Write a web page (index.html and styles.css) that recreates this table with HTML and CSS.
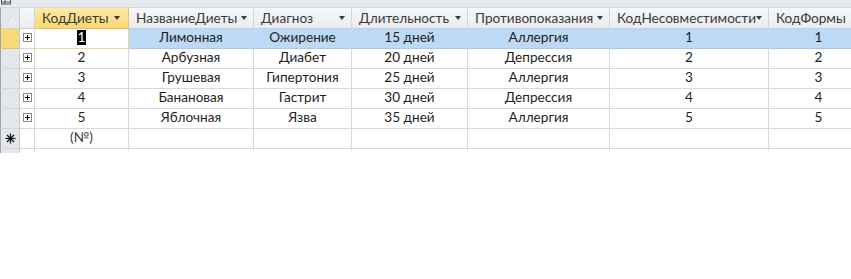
FILE: index.html
```html
<!DOCTYPE html>
<html lang="ru">
<head>
<meta charset="utf-8">
<title>Диеты</title>
<link rel="stylesheet" href="styles.css">
</head>
<body>
<div class="topstrip">
  <svg class="tabicon" width="10" height="6" viewBox="0 0 10 6"><rect x="0.5" y="-3" width="9" height="7" fill="#f4f4f4" stroke="#555"/><line x1="0" y1="2" x2="10" y2="2" stroke="#555"/><line x1="4" y1="-2" x2="4" y2="4" stroke="#555"/></svg>
</div>
<table class="sheet">
  <colgroup>
    <col class="c-sel"><col class="c-exp"><col class="c1"><col class="c2"><col class="c3"><col class="c4"><col class="c5"><col class="c6"><col class="c7">
  </colgroup>
  <thead>
    <tr>
      <th class="selall"><svg width="20" height="20" viewBox="0 0 20 20"><path d="M12 5 L6 15" stroke="#d8dce2" stroke-width="1"/><path d="M13 6 L8 15 L13 15 Z" fill="#eceef1"/></svg></th>
      <th class="hexp"></th>
      <th class="hd active"><span class="ht">КодДиеты</span><span class="arr"></span></th>
      <th class="hd"><span class="ht">НазваниеДиеты</span><span class="arr"></span></th>
      <th class="hd"><span class="ht">Диагноз</span><span class="arr"></span></th>
      <th class="hd"><span class="ht">Длительность</span><span class="arr"></span></th>
      <th class="hd"><span class="ht">Противопоказания</span><span class="arr"></span></th>
      <th class="hd"><span class="ht">КодНесовместимости</span><span class="arr"></span></th>
      <th class="hd"><span class="ht">КодФормы</span><span class="arr"></span></th>
    </tr>
  </thead>
  <tbody>
    <tr class="cur">
      <td class="sel cursel"></td>
      <td class="exp"><span class="plus"></span></td>
      <td class="curcell"><span class="hl">1</span></td>
      <td>Лимонная</td><td>Ожирение</td><td>15 дней</td><td>Аллергия</td><td>1</td><td>1</td>
    </tr>
    <tr>
      <td class="sel"></td>
      <td class="exp"><span class="plus"></span></td>
      <td>2</td><td>Арбузная</td><td>Диабет</td><td>20 дней</td><td>Депрессия</td><td>2</td><td>2</td>
    </tr>
    <tr>
      <td class="sel"></td>
      <td class="exp"><span class="plus"></span></td>
      <td>3</td><td>Грушевая</td><td>Гипертония</td><td>25 дней</td><td>Аллергия</td><td>3</td><td>3</td>
    </tr>
    <tr>
      <td class="sel"></td>
      <td class="exp"><span class="plus"></span></td>
      <td>4</td><td>Банановая</td><td>Гастрит</td><td>30 дней</td><td>Депрессия</td><td>4</td><td>4</td>
    </tr>
    <tr>
      <td class="sel"></td>
      <td class="exp"><span class="plus"></span></td>
      <td>5</td><td>Яблочная</td><td>Язва</td><td>35 дней</td><td>Аллергия</td><td>5</td><td>5</td>
    </tr>
    <tr class="newrow">
      <td class="sel"><svg width="11" height="11" viewBox="0 0 11 11"><g stroke="#111" stroke-width="1.2"><line x1="5.5" y1="0.5" x2="5.5" y2="10.5"/><line x1="0.5" y1="5.5" x2="10.5" y2="5.5"/><line x1="2" y1="2" x2="9" y2="9"/><line x1="9" y1="2" x2="2" y2="9"/></g></svg></td>
      <td class="exp"></td>
      <td class="auto">(№)</td>
      <td></td><td></td><td></td><td></td><td></td><td></td>
    </tr>
    <tr class="tail">
      <td class="sel"></td><td class="exp"></td><td></td><td></td><td></td><td></td><td></td><td></td><td></td>
    </tr>
  </tbody>
</table>
</body>
</html>
```

FILE: styles.css
```css
html, body {
  margin: 0;
  padding: 0;
  background: #ffffff;
  overflow: hidden;
}
body {
  width: 851px;
  height: 279px;
  font-family: Lato, "Open Sans", "Liberation Sans", sans-serif;
  font-size: 13.6px;
  color: #1e1e1e;
}
.topstrip {
  height: 7px;
  background: #e6e9ed;
  position: relative;
}
.tabicon {
  display: block;
  position: absolute;
  left: 1px;
  top: 0;
}
.sheet {
  table-layout: fixed;
  border-collapse: separate;
  border-spacing: 0;
  width: 869px;
}
.c-sel { width: 20px; }
.c-exp { width: 15px; }
.c1 { width: 94px; }
.c2 { width: 125px; }
.c3 { width: 98px; }
.c4 { width: 116px; }
.c5 { width: 142px; }
.c6 { width: 159px; }
.c7 { width: 100px; }

th {
  box-sizing: border-box;
  height: 21px;
  padding: 0;
  font-weight: normal;
  text-align: left;
  background: linear-gradient(#f6f7f9, #e9ecf0);
  border-right: 1px solid #d0d5dc;
  border-bottom: 1px solid #c9cfd7;
  border-top: 1px solid #d3d8de;
  color: #3a3a3a;
  white-space: nowrap;
}
th.selall {
  background: #e4e7eb;
  border-left: 1px solid #9ea4ab;
  border-right: 1px solid #c6ccd4;
  vertical-align: top;
}
th.selall svg { display: block; }
th.hexp {
  background: linear-gradient(#f6f7f9, #e9ecf0);
}
th.hd {
  position: relative;
  padding-left: 7px;
}
th.active {
  background: linear-gradient(#fdeaa8, #fbd972);
  border-right-color: #e2c66f;
  border-bottom-color: #e8c25a;
}
.ht {
  display: inline-block;
  line-height: 18px;
  padding-bottom: 1px;
}
.arr {
  position: absolute;
  right: 6px;
  top: 8px;
  width: 0;
  height: 0;
  border-left: 3.5px solid transparent;
  border-right: 3.5px solid transparent;
  border-top: 4px solid #3c3c3c;
}
th.active .arr {
  right: 8px;
}

td {
  box-sizing: border-box;
  height: 20px;
  padding: 0 0 2px 0;
  text-align: center;
  white-space: nowrap;
  border-right: 1px solid #d5dae1;
  border-bottom: 1px solid #d5dae1;
  line-height: 17px;
  overflow: hidden;
}
td.sel {
  padding: 0;
  background: #e4e7eb;
  border-left: 1px solid #9ea4ab;
  border-right: 1px solid #c6ccd4;
  border-bottom: 1px solid #d3d8de;
}
td.sel svg { display: block; margin: 0 auto; }
td.cursel {
  background: #f9d877;
  border-bottom-color: #e8c25a;
}
td.exp {
  padding: 0;
  background: #ffffff;
}
tr.cur td {
  background: #bcd9f6;
  border-right-color: #bcd9f6;
  border-bottom-color: #a9c8ea;
}
tr.cur td.sel {
  background: #f9d877;
  border-right-color: #c6ccd4;
  border-bottom-color: #e8c25a;
}
tr.cur td.exp {
  background: #ffffff;
  border-right-color: #d5dae1;
  border-bottom-color: #d5dae1;
}
tr.cur td.curcell {
  background: #ffffff;
  border-right: 1px solid #f0d890;
  border-bottom: 1px solid #f0d890;
}
.hl {
  display: inline-block;
  background: #000;
  color: #fff;
  line-height: 15px;
  padding: 0 1px;
}
.plus {
  display: inline-block;
  width: 9px;
  height: 9px;
  box-sizing: border-box;
  border: 1px solid #8a8a8a;
  background:
    linear-gradient(#000, #000) center / 5px 1px no-repeat,
    linear-gradient(#000, #000) center / 1px 5px no-repeat,
    #fff;
  vertical-align: middle;
  margin-top: -4px;
}
td.auto {
  color: #3a3a3a;
}
tr.tail td {
  height: 4px;
  padding: 0;
  border-bottom: none;
  background: #fff;
}
tr.tail td.sel {
  background: #e4e7eb;
}
tr.tail td:not(.sel):not(.exp) {
  border-right-color: #eceff2;
}
```
